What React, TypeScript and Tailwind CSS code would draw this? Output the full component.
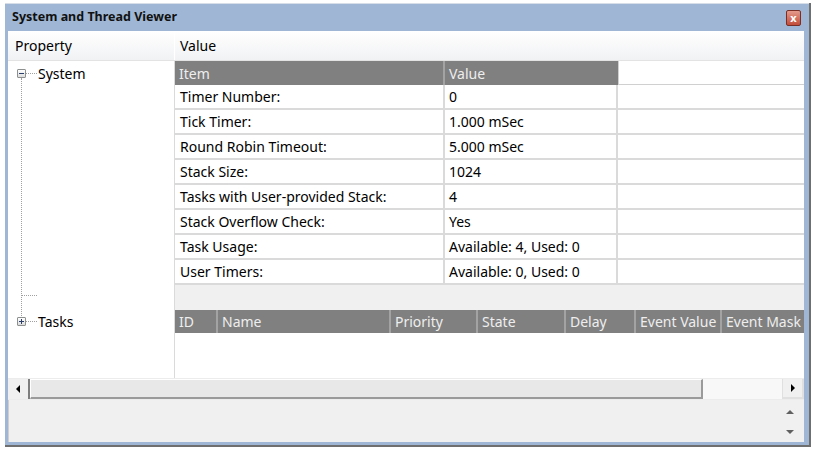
import React from 'react';

const topRows: [string, string][] = [
  ['Timer Number:', '0'],
  ['Tick Timer:', '1.000 mSec'],
  ['Round Robin Timeout:', '5.000 mSec'],
  ['Stack Size:', '1024'],
  ['Tasks with User-provided Stack:', '4'],
  ['Stack Overflow Check:', 'Yes'],
  ['Task Usage:', 'Available: 4, Used: 0'],
  ['User Timers:', 'Available: 0, Used: 0'],
];

const taskCols: [string, string][] = [
  ['ID', 'w-[43px]'],
  ['Name', 'w-[173px]'],
  ['Priority', 'w-[87px]'],
  ['State', 'w-[88px]'],
  ['Delay', 'w-[70px]'],
  ['Event Value', 'w-[86px]'],
  ['Event Mask', 'w-[90px]'],
];

function TreeBox({ open }: { open: boolean }) {
  return (
    <div className="relative w-[9px] h-[9px] shrink-0 border border-[#8e8f8f] rounded-[1px] bg-gradient-to-b from-white to-[#dcdcdc]">
      <div className="absolute left-[1px] top-[3px] w-[5px] h-[1px] bg-[#2c3f6b]" />
      {!open && <div className="absolute left-[3px] top-[1px] w-[1px] h-[5px] bg-[#2c3f6b]" />}
    </div>
  );
}

function Tri({ dir }: { dir: 'l' | 'r' | 'u' | 'd' }) {
  const pts = {
    l: '5,0 5,8 1,4',
    r: '1,0 1,8 5,4',
    u: '0,4 8,4 4,0',
    d: '0,0 8,0 4,4',
  }[dir];
  const small = dir === 'u' || dir === 'd';
  return (
    <svg width={small ? 8 : 6} height={small ? 5 : 8} viewBox={small ? '0 0 8 5' : '0 0 6 8'}>
      <polygon points={pts} fill={small ? '#606060' : '#000'} />
    </svg>
  );
}

export default function App() {
  return (
    <div className="w-[820px] h-[455px] bg-white pt-[3px] pl-[5px] font-['Noto_Sans',sans-serif] text-[14px] text-black">
      <div className="w-[806px] h-[444px] border-r-2 border-b-2 border-[#6f6f6f]">
        <div className="h-full flex flex-col bg-[#9fb7d4] pl-[3px] pr-[5px] pb-[3px] border-t border-[#d7dee8]">
          {/* title bar */}
          <div className="h-[27px] flex items-center justify-between pl-[4px] pr-[3px]">
            <span className="font-bold text-[12.5px] text-[#111]">System and Thread Viewer</span>
            <div className="w-[15px] h-[16px] rounded-[2px] border border-[#7a2f26] bg-gradient-to-b from-[#e39a8c] to-[#c24c3a] flex items-center justify-center">
              <span className="text-white text-[11px] font-bold leading-none">x</span>
            </div>
          </div>

          <div className="flex-1 flex flex-col bg-white">
            {/* property/value header */}
            <div className="h-[30px] flex bg-gradient-to-b from-white to-[#f1f2f4] border-b border-[#e3e3e3]">
              <div className="w-[167px] pl-[7px] flex items-center border-r border-white">Property</div>
              <div className="pl-[5px] flex items-center">Value</div>
            </div>

            <div className="h-[317px] flex">
              {/* tree */}
              <div className="w-[167px] shrink-0 border-r border-[#dadada] pl-[9px] pt-[3px]">
                <div className="h-[18px] flex items-center">
                  <TreeBox open />
                  <div className="w-[11px] border-t border-dotted border-[#a0a0a0]" />
                  <span className="pl-[1px]">System</span>
                </div>
                <div className="ml-[4px] h-[238px] border-l border-dotted border-[#a0a0a0] flex flex-col justify-end pb-[20px] mt-[-4px]">
                  <div className="w-[15px] border-t border-dotted border-[#a0a0a0]" />
                </div>
                <div className="h-[10px] flex items-center">
                  <TreeBox open={false} />
                  <div className="w-[11px] border-t border-dotted border-[#a0a0a0]" />
                  <span className="pl-[1px]">Tasks</span>
                </div>
              </div>

              {/* values */}
              <div className="flex-1 flex flex-col overflow-hidden">
                <div className="flex h-[24px]">
                  <div className="w-[270px] bg-[#808080] text-[#eeeeee] pl-[4px] flex items-center border-r-2 border-[#a3a3a3]">Item</div>
                  <div className="w-[173px] bg-[#808080] text-[#eeeeee] pl-[4px] flex items-center">Value</div>
                  <div className="flex-1 border-l border-b border-[#d0d0d0]" />
                </div>
                {topRows.map(([k, v]) => (
                  <div key={k} className="flex h-[25px] border-b-2 border-[#dadada]">
                    <div className="w-[270px] pl-[5px] flex items-center border-r-2 border-[#dadada]">{k}</div>
                    <div className="w-[173px] pl-[4px] flex items-center border-r-2 border-[#dadada]">{v}</div>
                    <div className="flex-1" />
                  </div>
                ))}
                <div className="h-[25px] bg-[#f0f0f0]" />
                <div className="flex h-[23px] bg-[#808080] text-[#eeeeee] whitespace-nowrap">
                  {taskCols.map(([c, w]) => (
                    <div key={c} className={`${w} shrink-0 pl-[4px] flex items-center border-r-2 border-[#a3a3a3]`}>{c}</div>
                  ))}
                </div>
                <div className="flex-1" />
              </div>
            </div>

            {/* horizontal scrollbar */}
            <div className="h-[22px] flex bg-[#f8f8f8] border-t border-[#ececec] border-b border-[#8c8c8c]">
              <div className="w-[22px] flex items-center justify-center border-r-2 border-[#7e7e7e] bg-[#f0f0f0]">
                <Tri dir="l" />
              </div>
              <div className="w-[673px] bg-[#e8e8e8] border-r-2 border-b-2 border-[#9a9a9a] border-l border-t border-l-white border-t-white" />
              <div className="flex-1" />
              <div className="w-[22px] flex items-center justify-center border-l border-[#e0e0e0] border-r-2 border-b-2 border-[#9a9a9a] bg-[#f0f0f0]">
                <Tri dir="r" />
              </div>
            </div>

            {/* bottom panel */}
            <div className="flex-1 bg-[#f0f0f0] flex justify-end pr-[10px] border-l border-[#cfcfcf]">
              <div className="flex flex-col justify-center gap-[15px] pt-[3px]">
                <Tri dir="u" />
                <Tri dir="d" />
              </div>
            </div>
          </div>
        </div>
      </div>
    </div>
  );
}
